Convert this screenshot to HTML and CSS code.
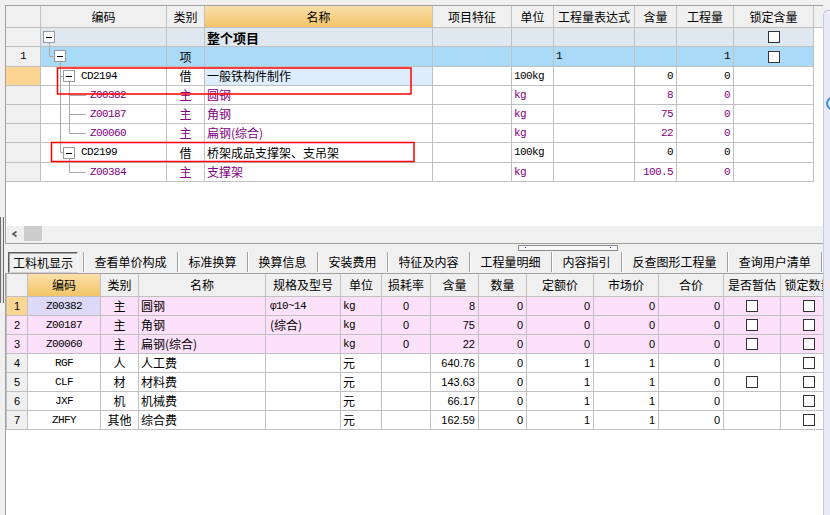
FILE: index.html
```html
<!DOCTYPE html>
<html lang="zh-CN">
<head>
<meta charset="utf-8">
<title>工料机显示</title>
<link rel="stylesheet" href="styles.css">
</head>
<body>
<div class="app">
  <div class="gutter"><div class="gutter-handle"></div></div>

  <div class="main">
    <div class="top-panel">
      <div class="grid-view">
        <div class="tgrid">
          <div class="h"></div><div class="h">编码</div><div class="h">类别</div><div class="h hl">名称</div><div class="h">项目特征</div><div class="h">单位</div><div class="h">工程量表达式</div><div class="h">含量</div><div class="h">工程量</div><div class="h">锁定含量</div><div class="h hf"></div>

          <div class="c num"></div><div class="c r0"></div><div class="c r0"></div><div class="c r0 bold">整个项目</div><div class="c r0"></div><div class="c r0"></div><div class="c r0"></div><div class="c r0"></div><div class="c r0"></div><div class="c r0 ctr"><span class="cb"></span></div><div class="f"></div>

          <div class="c num ctr mono">1</div><div class="c r1"></div><div class="c r1 ctr">项</div><div class="c r1"></div><div class="c r1"></div><div class="c r1"></div><div class="c r1 mono">1</div><div class="c r1"></div><div class="c r1 rt mono">1</div><div class="c r1 ctr"><span class="cb"></span></div><div class="f"></div>

          <div class="c num cur"></div><div class="c mono lv2">CD2194</div><div class="c ctr">借</div><div class="c selc">一般铁构件制作</div><div class="c"></div><div class="c mono">100kg</div><div class="c"></div><div class="c rt mono">0</div><div class="c rt mono">0</div><div class="c"></div><div class="f"></div>

          <div class="c num"></div><div class="c mono lv3 pu">Z00382</div><div class="c ctr pu">主</div><div class="c pu">圆钢</div><div class="c"></div><div class="c mono pu">kg</div><div class="c"></div><div class="c rt mono pu">8</div><div class="c rt mono pu">0</div><div class="c"></div><div class="f"></div>

          <div class="c num"></div><div class="c mono lv3 pu">Z00187</div><div class="c ctr pu">主</div><div class="c pu">角钢</div><div class="c"></div><div class="c mono pu">kg</div><div class="c"></div><div class="c rt mono pu">75</div><div class="c rt mono pu">0</div><div class="c"></div><div class="f"></div>

          <div class="c num"></div><div class="c mono lv3 pu">Z00060</div><div class="c ctr pu">主</div><div class="c pu">扁钢(综合)</div><div class="c"></div><div class="c mono pu">kg</div><div class="c"></div><div class="c rt mono pu">22</div><div class="c rt mono pu">0</div><div class="c"></div><div class="f"></div>

          <div class="c num"></div><div class="c mono lv2">CD2199</div><div class="c ctr">借</div><div class="c">桥架成品支撑架、支吊架</div><div class="c"></div><div class="c mono">100kg</div><div class="c"></div><div class="c rt mono">0</div><div class="c rt mono">0</div><div class="c"></div><div class="f"></div>

          <div class="c num"></div><div class="c mono lv3 pu">Z00384</div><div class="c ctr pu">主</div><div class="c pu">支撑架</div><div class="c"></div><div class="c mono pu">kg</div><div class="c"></div><div class="c rt mono pu">100.5</div><div class="c rt mono pu">0</div><div class="c"></div><div class="f"></div>
        </div>
      </div>
      <div class="hscroll">
        <svg class="arrow" width="17" height="16" viewBox="0 0 17 16"><polyline points="10.5,5.5 7,8 10.5,10.5" fill="none" stroke="#555" stroke-width="1.6"/></svg>
        <div class="thumb"></div>
      </div>
    </div>

    <div class="splitter"><div class="handle"><i></i><i></i></div></div>

    <div class="tabs">
      <div class="tab active">工料机显示</div><span class="sep"></span>
      <div class="tab">查看单价构成</div><span class="sep"></span>
      <div class="tab">标准换算</div><span class="sep"></span>
      <div class="tab">换算信息</div><span class="sep"></span>
      <div class="tab">安装费用</div><span class="sep"></span>
      <div class="tab">特征及内容</div><span class="sep"></span>
      <div class="tab">工程量明细</div><span class="sep"></span>
      <div class="tab">内容指引</div><span class="sep"></span>
      <div class="tab">反查图形工程量</div><span class="sep"></span>
      <div class="tab">查询用户清单</div><span class="sep"></span>
    </div>

    <div class="bottom-panel">
      <div class="bgrid">
        <div class="h"></div><div class="h hl">编码</div><div class="h">类别</div><div class="h">名称</div><div class="h">规格及型号</div><div class="h">单位</div><div class="h">损耗率</div><div class="h">含量</div><div class="h">数量</div><div class="h">定额价</div><div class="h">市场价</div><div class="h">合价</div><div class="h">是否暂估</div><div class="h">锁定数量</div>

        <div class="c num cur ctr sans">1</div><div class="c ctr mono lav">Z00382</div><div class="c ctr pk">主</div><div class="c pk">圆钢</div><div class="c pk mono sp">φ10~14</div><div class="c pk mono">kg</div><div class="c pk ctr sans">0</div><div class="c pk rt sans">8</div><div class="c pk rt sans">0</div><div class="c pk rt sans">0</div><div class="c pk rt sans">0</div><div class="c pk rt sans">0</div><div class="c pk ctr"><span class="cb"></span></div><div class="c pk ctr"><span class="cb"></span></div>

        <div class="c num pk ctr sans">2</div><div class="c ctr mono pk">Z00187</div><div class="c ctr pk">主</div><div class="c pk">角钢</div><div class="c pk sp">(综合)</div><div class="c pk mono">kg</div><div class="c pk ctr sans">0</div><div class="c pk rt sans">75</div><div class="c pk rt sans">0</div><div class="c pk rt sans">0</div><div class="c pk rt sans">0</div><div class="c pk rt sans">0</div><div class="c pk ctr"><span class="cb"></span></div><div class="c pk ctr"><span class="cb"></span></div>

        <div class="c num pk ctr sans">3</div><div class="c ctr mono pk">Z00060</div><div class="c ctr pk">主</div><div class="c pk">扁钢(综合)</div><div class="c pk"></div><div class="c pk mono">kg</div><div class="c pk ctr sans">0</div><div class="c pk rt sans">22</div><div class="c pk rt sans">0</div><div class="c pk rt sans">0</div><div class="c pk rt sans">0</div><div class="c pk rt sans">0</div><div class="c pk ctr"><span class="cb"></span></div><div class="c pk ctr"><span class="cb"></span></div>

        <div class="c num ctr sans">4</div><div class="c ctr mono">RGF</div><div class="c ctr">人</div><div class="c">人工费</div><div class="c"></div><div class="c">元</div><div class="c"></div><div class="c rt sans">640.76</div><div class="c rt sans">0</div><div class="c rt sans">1</div><div class="c rt sans">1</div><div class="c rt sans">0</div><div class="c"></div><div class="c ctr"><span class="cb"></span></div>

        <div class="c num ctr sans">5</div><div class="c ctr mono">CLF</div><div class="c ctr">材</div><div class="c">材料费</div><div class="c"></div><div class="c">元</div><div class="c"></div><div class="c rt sans">143.63</div><div class="c rt sans">0</div><div class="c rt sans">1</div><div class="c rt sans">1</div><div class="c rt sans">0</div><div class="c ctr"><span class="cb"></span></div><div class="c ctr"><span class="cb"></span></div>

        <div class="c num ctr sans">6</div><div class="c ctr mono">JXF</div><div class="c ctr">机</div><div class="c">机械费</div><div class="c"></div><div class="c">元</div><div class="c"></div><div class="c rt sans">66.17</div><div class="c rt sans">0</div><div class="c rt sans">1</div><div class="c rt sans">1</div><div class="c rt sans">0</div><div class="c"></div><div class="c ctr"><span class="cb"></span></div>

        <div class="c num ctr sans">7</div><div class="c ctr mono">ZHFY</div><div class="c ctr">其他</div><div class="c">综合费</div><div class="c"></div><div class="c">元</div><div class="c"></div><div class="c rt sans">162.59</div><div class="c rt sans">0</div><div class="c rt sans">1</div><div class="c rt sans">1</div><div class="c rt sans">0</div><div class="c"></div><div class="c ctr"><span class="cb"></span></div>
      </div>
    </div>
  </div>

  <div class="side"><div class="knob"></div></div>

  <svg class="overlay" width="830" height="515" viewBox="0 0 830 515">
    <g stroke="#a9a9a9" stroke-width="1" fill="none">
      <path d="M49.5 43 V56.5 H54"/>
      <path d="M60.5 62 V152.5 M60.5 76.5 H63 M60.5 152.5 H63"/>
      <path d="M69.5 82 V133.5 M69.5 95.5 H86 M69.5 114.5 H86 M69.5 133.5 H86"/>
      <path d="M69.5 159 V172.5 H86"/>
    </g>
    <g fill="#fff" stroke="#9a9a9a" stroke-width="1">
      <rect x="43.5" y="31.5" width="11" height="11"/>
      <rect x="54.5" y="50.5" width="11" height="11"/>
      <rect x="63.5" y="70.5" width="11" height="11"/>
      <rect x="63.5" y="147.5" width="11" height="11"/>
    </g>
    <g stroke="#000" stroke-width="1">
      <path d="M46 37.5 H52 M57 56.5 H63 M66 76.5 H72 M66 153.5 H72"/>
    </g>
    <g fill="none" stroke="#f00" stroke-width="1.5">
      <rect x="57.5" y="68" width="353.5" height="26"/>
      <rect x="51.5" y="142.5" width="362.5" height="19"/>
    </g>
  </svg>
</div>
</body>
</html>
```

FILE: styles.css
```css
* { box-sizing: border-box; margin: 0; padding: 0; }

html, body {
  width: 830px;
  height: 515px;
  overflow: hidden;
}

body {
  background: #f0f0f0;
  font-family: "Noto Sans CJK SC", "Noto Sans", sans-serif;
  font-size: 12px;
  color: #000;
}

.app {
  position: relative;
  display: flex;
  height: 515px;
}

/* left edge */
.gutter {
  width: 5px;
  flex: none;
  display: flex;
  flex-direction: column;
}
.gutter-handle {
  margin-top: 217px;
  width: 4px;
  height: 86px;
  border-left: 1px solid #707070;
  border-right: 1px solid #707070;
  background: #e4e4e4;
}

.main {
  width: 818px;
  flex: none;
  display: flex;
  flex-direction: column;
  padding-top: 5px;
}

/* right edge panel */
.side {
  flex: 1;
  margin-top: 10px;
  background: #ebebf6;
  border-top: 1px solid #c8c8de;
  border-left: 1px solid #c8c8de;
  border-top-left-radius: 5px;
  overflow: hidden;
}
.knob {
  margin-top: 86px;
  margin-left: 2px;
  width: 12px;
  height: 13px;
  border-radius: 50%;
  border: 2px solid #3f8fe0;
  background: #d6e8fb;
}

/* ---------- top grid ---------- */
.top-panel {
  height: 239px;
  flex: none;
  display: flex;
  flex-direction: column;
  border-top: 1px solid #a0a0a0;
  border-left: 1px solid #a0a0a0;
  border-bottom: 1px solid #a0a0a0;
}
.grid-view {
  height: 220px;
  background: #fff;
  overflow: hidden;
}
.tgrid {
  display: grid;
  grid-template-columns: 35px 126px 38px 228px 79px 42px 81px 42px 57px 80px 1fr;
  grid-template-rows: 22px 19px 20px 19px 19px 19px 19px 20px 19px;
}

.h {
  display: flex;
  align-items: center;
  justify-content: center;
  background: #f0f0f0;
  border-right: 1px solid #c0c0c0;
  border-bottom: 1px solid #c0c0c0;
  line-height: 1;
  white-space: nowrap;
  overflow: hidden;
}
.h.hl { background: linear-gradient(#fae0aa, #f3c468); }
.h.hf { border-right: none; }

.c {
  display: flex;
  align-items: center;
  padding: 0 2px;
  border-right: 1px solid #c0c0c0;
  border-bottom: 1px solid #c0c0c0;
  line-height: 1;
  white-space: nowrap;
  overflow: hidden;
}
.f { background: #fff; }

.ctr { justify-content: center; padding: 0; }
.rt { justify-content: flex-end; padding-right: 3px; }

.num { background: #f0f0f0; }
.num.cur { background: #fcd592; }
.r0 { background: #dfe7f1; }
.r1 { background: #a9daf8; }
.selc { background: #deedfd; }
.bold { font-weight: bold; font-size: 13px; }
.pu { color: #800080; }

.mono {
  font-family: "Liberation Mono", "Noto Sans CJK SC", monospace;
  font-size: 11px;
  letter-spacing: -0.6px;
}
.sans {
  font-family: "Liberation Sans", sans-serif;
  font-size: 11px;
}
.lv2 { padding-left: 40px; }
.lv3 { padding-left: 49px; }

.cb {
  display: block;
  width: 12px;
  height: 12px;
  border: 1px solid #333;
  background: #fff;
}

/* horizontal scrollbar */
.hscroll {
  height: 17px;
  display: flex;
  background: #f0f0f0;
}
.arrow { flex: none; display: block; }
.thumb {
  margin-left: 1px;
  width: 18px;
  height: 15px;
  background: #cdcdcd;
}

/* splitter */
.splitter {
  height: 7px;
  flex: none;
  display: flex;
  padding-left: 513px;
  padding-top: 1px;
}
.handle {
  width: 100px;
  height: 6px;
  border: 1px solid #8c8c8c;
  background: #f9f9f9;
  display: flex;
  justify-content: space-between;
  padding: 1px 6px 0;
}
.handle i {
  display: block;
  width: 1px;
  height: 1px;
  background: #2040c0;
}

/* tabs */
.tabs {
  height: 22px;
  flex: none;
  display: flex;
  align-items: center;
}
.tab {
  padding: 0 10.5px;
  line-height: 20px;
  white-space: nowrap;
}
.tab.active {
  margin-left: 3px;
  margin-right: 5px;
  width: 70px;
  height: 21px;
  padding: 0;
  text-align: center;
  border: 1px solid;
  border-color: #5e5e5e #f8f8f8 #d0d0d0 #5e5e5e;
  box-shadow: inset 1px 1px 0 #a8a8a8;
  line-height: 19px;
}
.sep {
  display: block;
  width: 1px;
  height: 20px;
  background: #a0a0a0;
  box-shadow: 1px 0 0 #fff;
}

/* ---------- bottom grid ---------- */
.bottom-panel {
  flex: 1;
  background: #fff;
  border-top: 1px solid #a0a0a0;
  border-left: 1px solid #a0a0a0;
  overflow: hidden;
}
.bgrid {
  display: grid;
  grid-template-columns: 21px 73px 38px 127px 75px 41px 49px 48px 48px 67px 65px 65px 57px 56px;
  grid-template-rows: 23px repeat(7, 19px);
  border-left: 1px solid #c0c0c0;
  width: 831px;
}
.pk { background: #fde1fb; }
.lav { background: #dcd9f9; }
.sp { padding-left: 4px; }

/* overlay: tree lines and annotations */
.overlay {
  position: absolute;
  left: 0;
  top: 0;
  pointer-events: none;
}
```
